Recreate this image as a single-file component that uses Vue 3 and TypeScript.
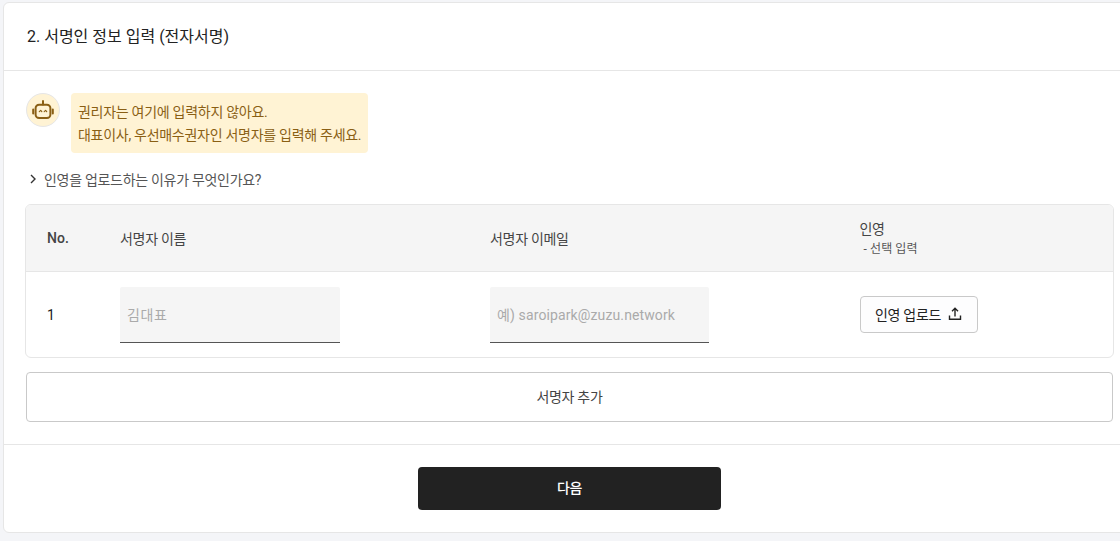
<script setup lang="ts">
const title = '2. 서명인 정보 입력 (전자서명)'
</script>

<template>
  <div class="page">
    <section class="card">
      <header class="card-head">{{ title }}</header>
      <div class="body">
        <div class="notice">
          <div class="avatar">
            <svg width="22" height="22" viewBox="0 0 22 22" fill="none" stroke="#8a5f14" stroke-width="2">
              <path d="M11 2v3.5" stroke-linecap="round" />
              <rect x="3.6" y="5.8" width="14.8" height="13.2" rx="3.5" />
              <path d="M1.2 10.5v4M20.8 10.5v4" stroke-linecap="round" />
              <path d="M7.3 12.6l1.4-1.2 1.1 1.2M12.2 12.6l1.4-1.2 1.1 1.2" stroke-width="1.2" stroke-linecap="round" stroke-linejoin="round" />
            </svg>
          </div>
          <div class="bubble">
            <p>권리자는 여기에 입력하지 않아요.</p>
            <p>대표이사, 우선매수권자인 서명자를 입력해 주세요.</p>
          </div>
        </div>
        <div class="why">
          <svg width="8" height="10" viewBox="0 0 8 10" fill="none" stroke="#333" stroke-width="1.4">
            <path d="M2 1l4 4-4 4" />
          </svg>
          <span>인영을 업로드하는 이유가 무엇인가요?</span>
        </div>
        <div class="table">
          <div class="row row-head">
            <div class="no-head">No.</div>
            <div>서명자 이름</div>
            <div>서명자 이메일</div>
            <div class="seal-head">
              <span>인영</span>
              <small>- 선택 입력</small>
            </div>
          </div>
          <div class="row row-body">
            <div class="num">1</div>
            <div class="field name-field">김대표</div>
            <div class="field email-field">예) saroipark@zuzu.network</div>
            <div>
              <button class="upload" type="button">
                인영 업로드
                <svg width="16" height="16" viewBox="0 0 16 16" fill="none" stroke="#222" stroke-width="1.4">
                  <path d="M8 10.5V2.5M5 5.3l3-3 3 3" />
                  <path d="M2.5 9.5v3.7h11V9.5" />
                </svg>
              </button>
            </div>
          </div>
        </div>
        <button class="add" type="button">서명자 추가</button>
      </div>
      <footer class="foot">
        <button class="next" type="button">다음</button>
      </footer>
    </section>
  </div>
</template>

<style>
html, body { margin: 0; background: #f4f5f8; overflow: hidden; }
</style>

<style scoped>
.page {
  width: 1120px;
  height: 541px;
  padding: 2px 0 0 3px;
  box-sizing: border-box;
  overflow: hidden;
  font-family: Roboto, "Noto Sans CJK KR", sans-serif;
  color: #222;
}
.card {
  width: 1130px;
  height: 531px;
  box-sizing: border-box;
  background: #fff;
  border: 1px solid #e6e6e6;
  border-radius: 6px;
  display: flex;
  flex-direction: column;
}
.card-head {
  height: 68px;
  flex: none;
  box-sizing: border-box;
  padding: 0 0 4px 23px;
  display: flex;
  align-items: center;
  font-size: 16px;
  border-bottom: 1px solid #e6e6e6;
}
.body {
  height: 374px;
  flex: none;
  box-sizing: border-box;
  padding: 22px 0 0 21px;
  border-bottom: 1px solid #e6e6e6;
}
.notice {
  display: flex;
  gap: 11px;
  margin-left: 1px;
}
.avatar {
  width: 34px;
  height: 34px;
  box-sizing: border-box;
  border: 1px solid #e6e6e6;
  border-radius: 50%;
  background: #fff3d4;
  display: flex;
  align-items: center;
  justify-content: center;
}
.bubble {
  width: 297px;
  height: 60px;
  box-sizing: border-box;
  padding: 8px 0 0 7px;
  background: #fff3d4;
  border-radius: 4px;
  color: #8a5f14;
  font-size: 14px;
  line-height: 23px;
  letter-spacing: -0.28px;
  white-space: nowrap;
}
.bubble p { margin: 0; }
.why {
  margin: 15px 0 0 4px;
  height: 22px;
  display: flex;
  align-items: center;
  gap: 7px;
  font-size: 14px;
  letter-spacing: -0.3px;
  color: #555;
}
.table {
  width: 1089px;
  height: 154px;
  box-sizing: border-box;
  margin-top: 14px;
  border: 1px solid #e6e6e6;
  border-radius: 6px;
  overflow: hidden;
}
.row {
  display: grid;
  grid-template-columns: 94px 370px 369.5px 1fr;
  align-items: center;
}
.row > :first-child { padding-left: 21px; }
.row-head {
  background: #f5f5f5;
  border-bottom: 1px solid #e6e6e6;
  box-sizing: border-box;
  height: 67px;
  font-size: 14px;
  letter-spacing: -0.3px;
  color: #444;
}
.no-head {
  font-weight: 500;
  letter-spacing: 0;
}
.seal-head {
  display: flex;
  flex-direction: column;
  line-height: 18px;
  padding-top: 2px;
}
.seal-head small {
  font-size: 12px;
  padding: 2px 0 0 4px;
  letter-spacing: 0.1px;
  color: #555;
}
.row-body { height: 85px; font-size: 14px; }
.num { padding-top: 1px; }
.field {
  box-sizing: border-box;
  width: 220px;
  height: 56px;
  margin-top: 0;
  padding-left: 7px;
  display: flex;
  align-items: center;
  background: #f5f5f5;
  border-bottom: 1px solid #555;
  border-radius: 2px 2px 0 0;
  color: #aaa;
  font-size: 14px;
  letter-spacing: 0.12px;
}
.name-field { letter-spacing: 0.6px; }
.email-field { width: 219px; }
.upload {
  box-sizing: border-box;
  width: 118px;
  height: 37px;
  display: flex;
  align-items: center;
  justify-content: center;
  gap: 6px;
  background: #fdfdfe;
  border: 1px solid #c9c9c9;
  border-radius: 4px;
  font: inherit;
  font-size: 14px;
  letter-spacing: -0.28px;
  color: #222;
  padding: 0 0 0 1px;
  margin-top: -1px;
}
.add {
  display: block;
  width: 1087px;
  height: 50px;
  margin: 14px 0 0 1px;
  box-sizing: border-box;
  background: #fff;
  border: 1px solid #c9c9c9;
  border-radius: 4px;
  font: inherit;
  font-size: 14px;
  letter-spacing: -0.3px;
  padding-bottom: 3px;
  color: #444;
}
.foot {
  flex: 1;
  padding: 22px 0 0 414px;
}
.next {
  width: 303px;
  height: 43px;
  background: #222;
  color: #fff;
  border: none;
  border-radius: 4px;
  font: inherit;
  font-size: 14px;
  letter-spacing: -0.28px;
  padding-bottom: 5px;
  font-weight: 500;
}
</style>
